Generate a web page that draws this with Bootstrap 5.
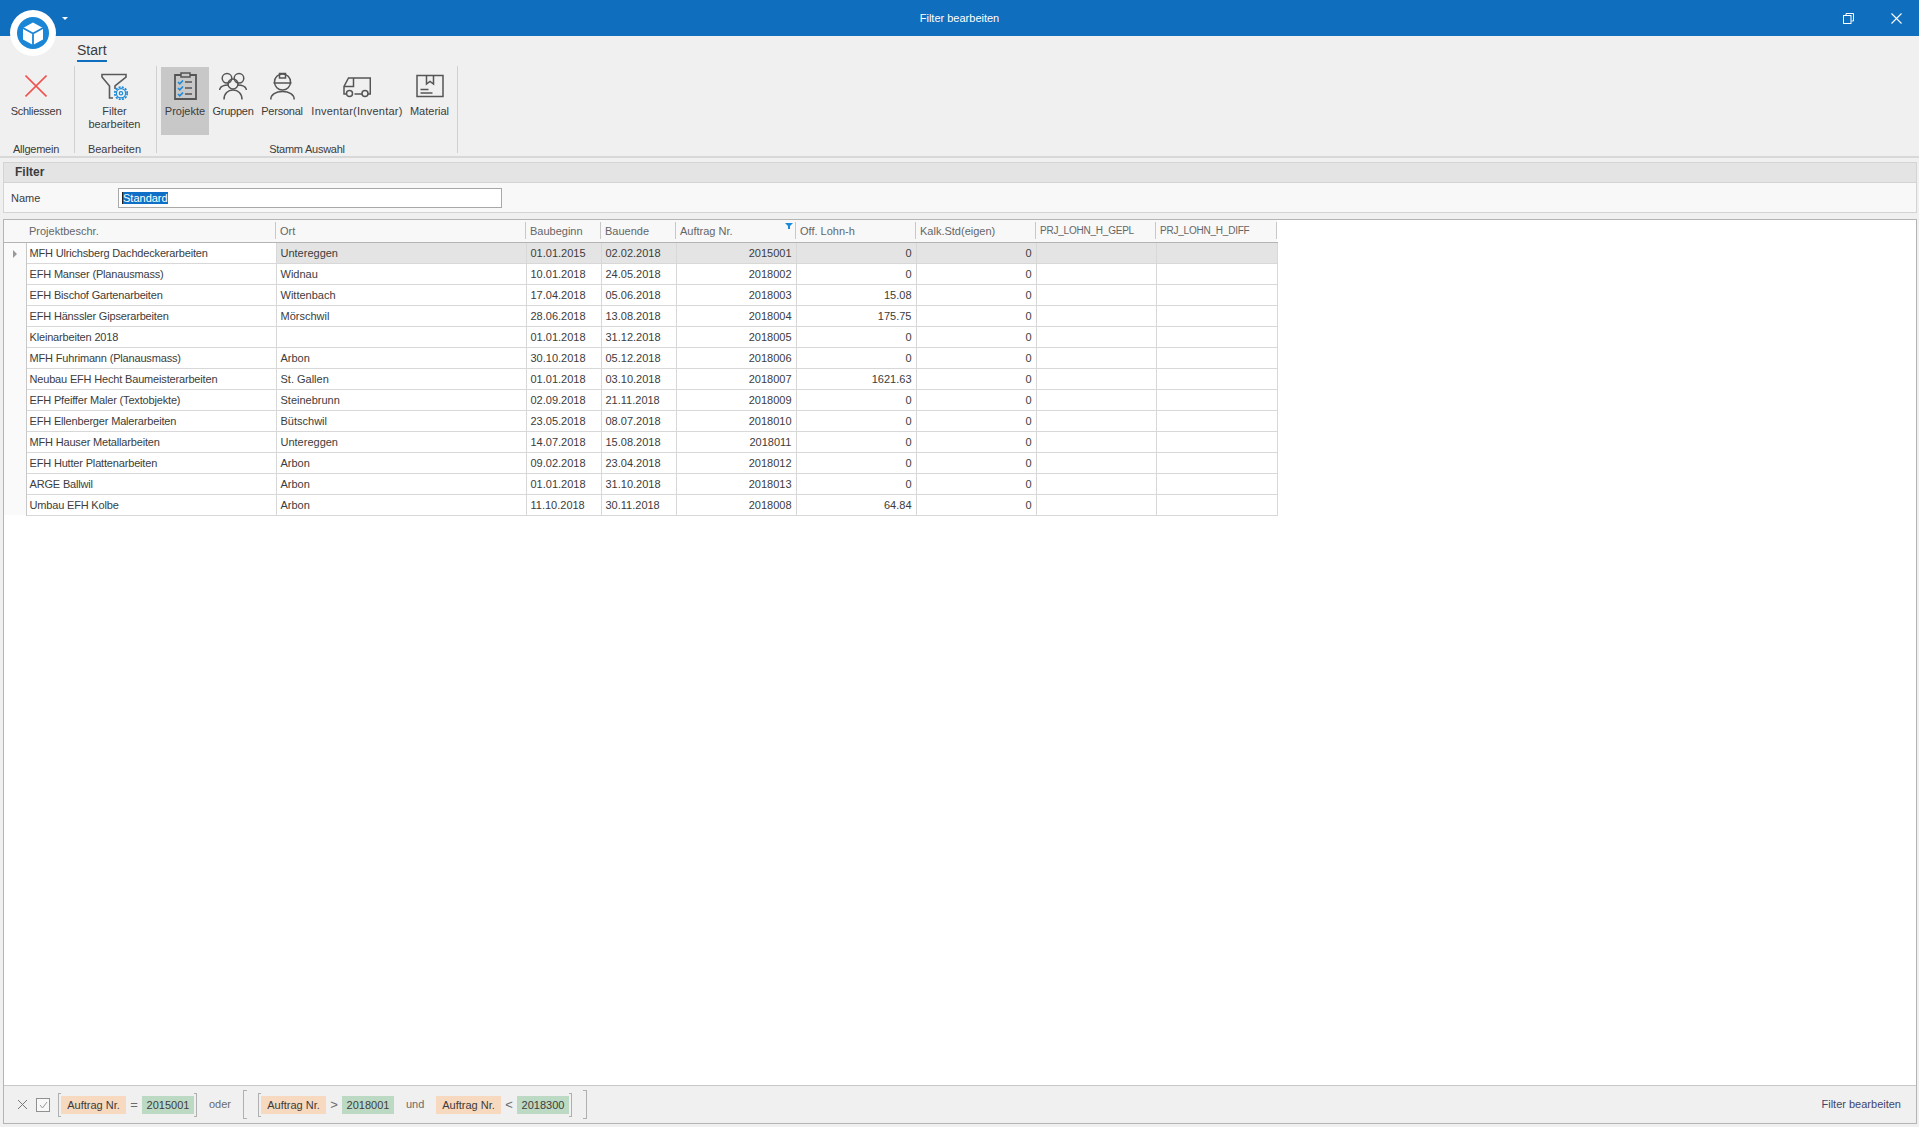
<!doctype html>
<html lang="de"><head><meta charset="utf-8"><title>Filter bearbeiten</title>
<link href="https://cdn.jsdelivr.net/npm/bootstrap@5.3.0/dist/css/bootstrap.min.css" rel="stylesheet">
<style>
html,body{height:100%;}
body{background:#f0f0f0;font-family:"Liberation Sans",Arial,sans-serif;font-size:11px;color:#3c3c3c;overflow:hidden;}
.app{height:1127px;width:1919px;position:relative;}
.titlebar{height:36px;background:#106ebe;color:#fff;padding:0 17px 0 0;position:relative;flex:none;}
.titletext{left:0;right:0;text-align:center;position:absolute;top:11px;line-height:14px;}
.logo{position:absolute;left:10px;top:10px;width:46px;height:46px;z-index:3;}
.qat{position:absolute;left:62px;top:17px;width:0;height:0;border-left:3px solid transparent;border-right:3px solid transparent;border-top:3px solid #fff;}
.winbtns{margin-left:auto;gap:37px;}
.tabrow{height:29px;padding-left:77px;flex:none;}
.tabname{font-size:14px;color:#3c3c3c;border-bottom:2.5px solid #106ebe;line-height:18px;height:26px;padding:5px 0 0;width:30px;white-space:nowrap;}
.ribbon{height:93px;border-bottom:2px solid #d8d8d8;padding-top:1px;flex:none;}
.rgroup{border-right:1px solid #d0d0d0;height:87px;display:flex;flex-direction:column;}
.rgrp1{width:75px;padding-right:2px;}.rgrp2{width:82px;padding-right:2px;}.rgrp3{width:301px;padding-left:4px;}
.rbtn{height:68px;margin-top:1px;text-align:center;line-height:13px;padding-top:5px;white-space:nowrap;}
.rbtn svg{display:block;margin:0 auto 5px;}
.rbtn.on{background:#c8c8c8;}
.w48{width:48px}.w50{width:50px}.w100{width:100px}.w45{width:45px}
.tight{letter-spacing:-.25px;}
.loose{letter-spacing:.25px;}
.grouplabel{margin-top:auto;text-align:center;line-height:8px;}
.rgrp3 .grouplabel{margin-left:-4px;}
.panel{margin:4px 0 0 3px;width:1914px;height:51px;border:1px solid #d4d4d4;background:#f8f8f8;flex:none;}
.panelhead{background:#e4e4e4;height:20px;font-weight:700;padding-left:11px;line-height:19px;border-bottom:1px solid #d4d4d4;font-size:12px;}
.namelabel{width:114px;padding-left:7px;}
.namerow{padding-top:5px;}
.nameinput{width:384px;height:20px;border:1px solid #a8a8a8;background:#fff;padding:2px 3px;line-height:14px;}
.sel{background:#0f6fc6;color:#fff;border-left:1px solid #222;}
.gridwrap{margin:6px 0 0 3px;width:1914px;height:905px;border:1px solid #b4b4b4;background:#fff;display:flex;flex-direction:column;flex:none;}
.gridbody{flex:1 1 auto;min-height:0;}
.gtable{table-layout:fixed;width:1273px;border-collapse:collapse;margin:0;}
.gtable th,.gtable td{border:1px solid #d8d8d8;border-width:0 1px 1px 0;padding:0 4px;height:21px;line-height:20px;font-weight:400;white-space:nowrap;overflow:hidden;color:#3c3c3c;background:#fff;font-size:11px;}
.gtable th{background:#f8f8f8 linear-gradient(#c8c8c8,#c8c8c8) right center/1px 17px no-repeat;height:22px;border-width:0 0 1px 0;border-bottom:1px solid #b4b4b4;color:#666;position:relative;}
.gtable th:first-child{background-image:none;}
.gtable th:nth-child(2),.gtable td:nth-child(2){padding-left:3px;}
.gtable th.caps{font-size:10px;letter-spacing:-.22px;padding-top:1px;}
.gtable td:nth-child(2){letter-spacing:-.17px;}
.gtable td.ind{background:#fafafa;border-right:1px solid #c8c8c8;border-bottom:0;padding:0;text-align:center;}
.gtable tr.cur td:not(.ind):not(.first){background:#e4e4e4;}
.c0{width:22px}.c1,.c2{width:250px}.c3,.c4{width:75px}.c5,.c6,.c7,.c8{width:120px}.c9{width:121px}
.gtable .num{text-align:right;}
.sorticon{position:absolute;right:3px;top:3px;width:8px;height:6px;}
.fbar{height:38px;flex:none;background:#f0f0f0;border-top:1px solid #c8c8c8;padding:0 15px 0 14px;}
.chip{height:18px;line-height:18px;color:#3c3c3c;white-space:nowrap;text-align:center;}
.chipf{background:#f6d9bf;width:65px;}
.chipv{background:#bcd9c4;width:52px;}
.op{width:16px;text-align:center;color:#6b6b6b;font-size:13px;line-height:18px;}
.oder{color:#6b6b6b;margin:0 13px 0 12px;width:21px;}
.und{color:#6b6b6b;margin:0 13px 0 12px;width:17px;}
.bl,.br{flex:none;width:3px;height:24px;border:1px solid #b0b0b0;}
.bl{border-right:0;}.br{border-left:0;}
.big{height:29px;width:4px;}
.big.bl{margin-right:11px;}.big.br{margin-left:11px;}
.cb{width:14px;height:14px;border:1px solid #909090;background:#f8f8f8;display:flex;align-items:center;justify-content:center;margin:0 8px 0 9px;}
.fedit{margin-left:auto;color:#44446a;}
</style></head><body>
<div class="app d-flex flex-column">
 <div class="titlebar d-flex align-items-center">
  <div class="titletext">Filter bearbeiten</div>
  <div class="qat"></div>
  <div class="winbtns d-flex align-items-center">
   <svg width="11" height="11" viewBox="0 0 11 11" fill="none" stroke="#fff"><path d="M3 2.500V.5h7.500v7.500H8.500"/><rect x=".5" y="2.500" width="7.500" height="8"/></svg>
   <svg width="11" height="11" viewBox="0 0 11 11" stroke="#fff" stroke-width="1.100"><path d="M.5.5l10 10M10.500.5l-10 10"/></svg>
  </div>
 </div>
 <svg class="logo" viewBox="0 0 46 46"><circle cx="23" cy="23" r="23" fill="#fff"/><circle cx="23" cy="23" r="16" fill="#1b85d6"/><path d="M23 12.500l10 5.500v11.500l-10 5.500-10-5.500V18z" fill="#fff"/><path d="M13 18l10 5.500L33 18M23 23.500V35" fill="none" stroke="#1b85d6" stroke-width="1.800"/></svg>
 <div class="tabrow d-flex"><div class="tabname">Start</div></div>
 <div class="ribbon d-flex">
  <div class="rgroup rgrp1">
   <div class="rbtn"><svg width="22" height="28" viewBox="0 0 22 28" stroke="#ef5350" stroke-width="1.700"><path d="M.5 3.500l21 21M21.500 3.500l-21 21"/></svg><span class="tight">Schliessen</span></div>
   <div class="grouplabel tight">Allgemein</div>
  </div>
  <div class="rgroup rgrp2">
   <div class="rbtn"><svg width="28" height="28" viewBox="0 0 28 28" fill="none"><path d="M14 17V14L25 5V2.500H1V5L8.500 14V26H12" stroke="#5a5a5a" stroke-width="1.600"/><circle cx="20" cy="21.300" r="6.200" stroke="#1c8ad8" stroke-width="1.700" stroke-dasharray="2 1.250"/><circle cx="20" cy="21.300" r="4.600" stroke="#1c8ad8" stroke-width="1.200"/><circle cx="20" cy="21.300" r="1.700" stroke="#1c8ad8" stroke-width="1.200"/></svg>Filter<br>bearbeiten</div>
   <div class="grouplabel">Bearbeiten</div>
  </div>
  <div class="rgroup rgrp3">
   <div class="d-flex">
    <div class="rbtn on w48"><svg width="23" height="28" viewBox="0 0 23 28" fill="none" stroke="#555"><path d="M7 3H1v24h21V3h-6" stroke-width="1.800"/><rect x="7" y="1" width="9" height="4" stroke-width="1.500"/><path d="M11 10h7M11 16h7M11 22h7" stroke-width="1.600"/><path d="M4 10l1.800 1.800L9 8.500M4 16l1.800 1.800L9 14.500M4 22l1.800 1.800L9 20.500" stroke="#1c8ad8" stroke-width="1.600"/></svg>Projekte</div>
    <div class="rbtn w48"><svg width="28" height="28" viewBox="0 0 28 28" fill="none" stroke="#555" stroke-width="1.500"><circle cx="8" cy="6.300" r="4.800"/><circle cx="20" cy="6.300" r="4.800"/><circle cx="14" cy="12" r="5"/><path d="M.5 18c.5-3 4-5 9-5M27.500 18c-.5-3-4-5-9-5M5 27.500c0-6 4-9.500 9-9.500s9 3.500 9 9.500"/></svg><span class="tight">Gruppen</span></div>
    <div class="rbtn w50"><svg width="25" height="28" viewBox="0 0 25 28" fill="none" stroke="#555" stroke-width="1.500"><circle cx="12.500" cy="10" r="8"/><path d="M3.500 11h18M9.500 1.500h6V6h-6zM.8 27.500c0-5 5-8 11.700-8s11.700 3 11.700 8"/></svg><span class="tight">Personal</span></div>
    <div class="rbtn w100"><svg width="28" height="28" viewBox="0 0 28 28" fill="none" stroke="#555" stroke-width="1.500"><path d="M10.500 6H27.300V22h-2.500M19 22h-7.500M3.200 22H1v-7.500L5.500 6H10.500V14.500H1.500"/><circle cx="6.500" cy="21.500" r="3"/><circle cx="22" cy="21.500" r="3"/></svg><span class="loose">Inventar(Inventar)</span></div>
    <div class="rbtn w45"><svg width="28" height="28" viewBox="0 0 28 28" fill="none" stroke="#555" stroke-width="1.500"><rect x="1" y="3.500" width="26" height="21"/><path d="M10.500 3.500V12l3.500-2.500 3.500 2.500V3.500M4.500 17.500h8M4.500 21h12"/></svg>Material</div>
   </div>
   <div class="grouplabel tight">Stamm Auswahl</div>
  </div>
 </div>
 <div class="panel">
  <div class="panelhead">Filter</div>
  <div class="d-flex align-items-center namerow"><div class="namelabel">Name</div><div class="nameinput"><span class="sel">Standard</span></div></div>
 </div>
 <div class="gridwrap">
  <div class="gridbody">
  <table class="gtable">
   <colgroup><col class="c0"><col class="c1"><col class="c2"><col class="c3"><col class="c4"><col class="c5"><col class="c6"><col class="c7"><col class="c8"><col class="c9"></colgroup>
   <thead><tr><th></th><th>Projektbeschr.</th><th>Ort</th><th>Baubeginn</th><th>Bauende</th><th>Auftrag Nr.<svg class="sorticon" viewBox="0 0 8 6"><path d="M0 0h8L5 3v3H3V3z" fill="#1c8ad8"/></svg></th><th>Off. Lohn-h</th><th>Kalk.Std(eigen)</th><th class="caps">PRJ_LOHN_H_GEPL</th><th class="caps">PRJ_LOHN_H_DIFF</th></tr></thead>
   <tbody>
    <tr class="cur"><td class="ind"><svg width="4" height="8" viewBox="0 0 4 8"><path d="M0 0l4 4-4 4z" fill="#999"/></svg></td><td class="first">MFH Ulrichsberg Dachdeckerarbeiten</td><td>Untereggen</td><td>01.01.2015</td><td>02.02.2018</td><td class="num">2015001</td><td class="num">0</td><td class="num">0</td><td></td><td></td></tr>
    <tr><td class="ind"></td><td>EFH Manser (Planausmass)</td><td>Widnau</td><td>10.01.2018</td><td>24.05.2018</td><td class="num">2018002</td><td class="num">0</td><td class="num">0</td><td></td><td></td></tr>
    <tr><td class="ind"></td><td>EFH Bischof Gartenarbeiten</td><td>Wittenbach</td><td>17.04.2018</td><td>05.06.2018</td><td class="num">2018003</td><td class="num">15.08</td><td class="num">0</td><td></td><td></td></tr>
    <tr><td class="ind"></td><td>EFH Hänssler Gipserarbeiten</td><td>Mörschwil</td><td>28.06.2018</td><td>13.08.2018</td><td class="num">2018004</td><td class="num">175.75</td><td class="num">0</td><td></td><td></td></tr>
    <tr><td class="ind"></td><td>Kleinarbeiten 2018</td><td></td><td>01.01.2018</td><td>31.12.2018</td><td class="num">2018005</td><td class="num">0</td><td class="num">0</td><td></td><td></td></tr>
    <tr><td class="ind"></td><td>MFH Fuhrimann (Planausmass)</td><td>Arbon</td><td>30.10.2018</td><td>05.12.2018</td><td class="num">2018006</td><td class="num">0</td><td class="num">0</td><td></td><td></td></tr>
    <tr><td class="ind"></td><td>Neubau EFH Hecht Baumeisterarbeiten</td><td>St. Gallen</td><td>01.01.2018</td><td>03.10.2018</td><td class="num">2018007</td><td class="num">1621.63</td><td class="num">0</td><td></td><td></td></tr>
    <tr><td class="ind"></td><td>EFH Pfeiffer Maler (Textobjekte)</td><td>Steinebrunn</td><td>02.09.2018</td><td>21.11.2018</td><td class="num">2018009</td><td class="num">0</td><td class="num">0</td><td></td><td></td></tr>
    <tr><td class="ind"></td><td>EFH Ellenberger Malerarbeiten</td><td>Bütschwil</td><td>23.05.2018</td><td>08.07.2018</td><td class="num">2018010</td><td class="num">0</td><td class="num">0</td><td></td><td></td></tr>
    <tr><td class="ind"></td><td>MFH Hauser Metallarbeiten</td><td>Untereggen</td><td>14.07.2018</td><td>15.08.2018</td><td class="num">2018011</td><td class="num">0</td><td class="num">0</td><td></td><td></td></tr>
    <tr><td class="ind"></td><td>EFH Hutter Plattenarbeiten</td><td>Arbon</td><td>09.02.2018</td><td>23.04.2018</td><td class="num">2018012</td><td class="num">0</td><td class="num">0</td><td></td><td></td></tr>
    <tr><td class="ind"></td><td>ARGE Ballwil</td><td>Arbon</td><td>01.01.2018</td><td>31.10.2018</td><td class="num">2018013</td><td class="num">0</td><td class="num">0</td><td></td><td></td></tr>
    <tr><td class="ind"></td><td>Umbau EFH Kolbe</td><td>Arbon</td><td>11.10.2018</td><td>30.11.2018</td><td class="num">2018008</td><td class="num">64.84</td><td class="num">0</td><td></td><td></td></tr>
   </tbody>
  </table>
  </div>
  <div class="fbar d-flex align-items-center">
   <svg width="9" height="9" viewBox="0 0 9 9" stroke="#777"><path d="M0 0l9 9M9 0L0 9"/></svg>
   <div class="cb"><svg width="9" height="8" viewBox="0 0 9 8" fill="none" stroke="#999"><path d="M1 4l2.500 3L8 1"/></svg></div>
   <div class="bl"></div><div class="chip chipf">Auftrag Nr.</div><div class="op">=</div><div class="chip chipv">2015001</div><div class="br"></div>
   <div class="oder">oder</div>
   <div class="bl big"></div>
   <div class="bl"></div><div class="chip chipf">Auftrag Nr.</div><div class="op">&gt;</div><div class="chip chipv">2018001</div>
   <div class="und">und</div>
   <div class="chip chipf">Auftrag Nr.</div><div class="op">&lt;</div><div class="chip chipv">2018300</div><div class="br"></div>
   <div class="br big"></div>
   <div class="fedit">Filter bearbeiten</div>
  </div>
 </div>
</div>
<script src="https://cdn.jsdelivr.net/npm/bootstrap@5.3.0/dist/js/bootstrap.bundle.min.js"></script>
</body></html>
